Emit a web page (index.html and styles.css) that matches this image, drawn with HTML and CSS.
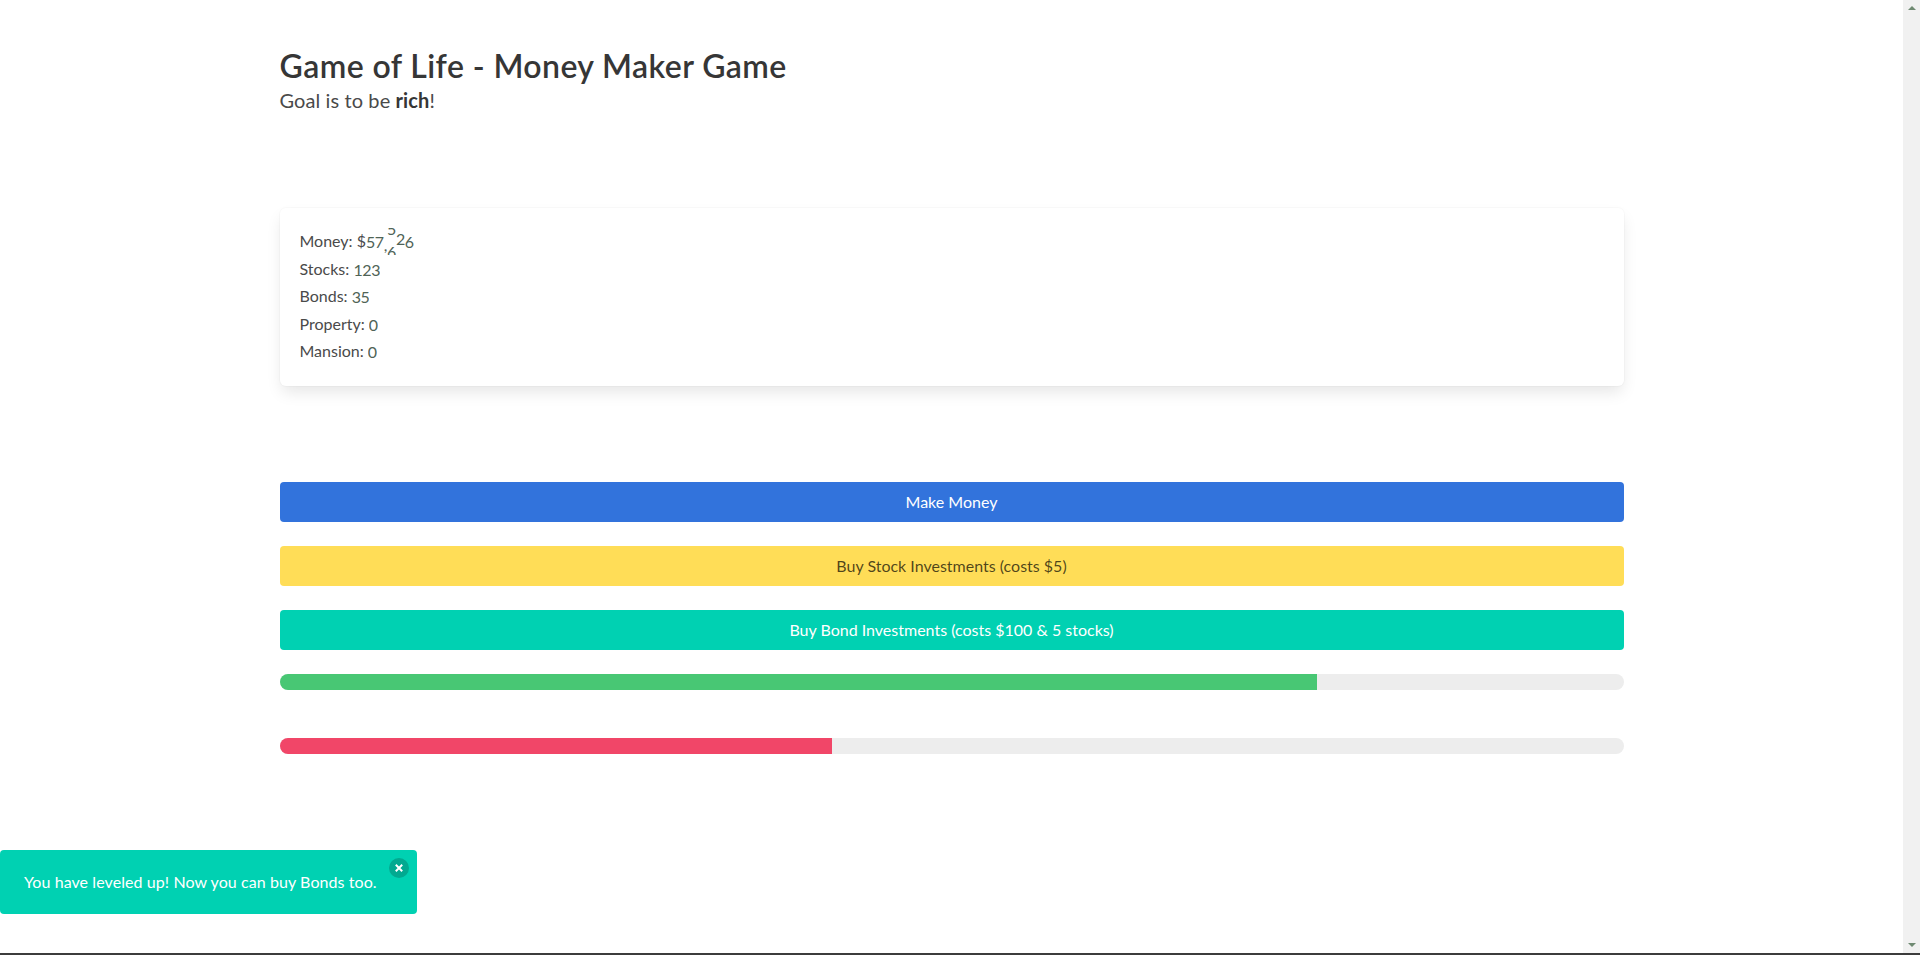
FILE: index.html
```html
<!DOCTYPE html>
<html lang="en">
<head>
  <meta charset="UTF-8">
  <meta name="viewport" content="width=device-width, initial-scale=1.0">
  <title>Game of Life - Money Maker Game</title>
  <link rel="stylesheet" href="styles.css">
</head>
<body>
  <div class="page">
    <main class="main">
      <section class="section">
        <div class="container">
          <h1 class="title">Game of Life - Money Maker Game</h1>
          <p class="subtitle">Goal is to be <strong>rich</strong>!</p>
        </div>
      </section>

      <section class="section">
        <div class="container">
          <div class="box">
            <div class="stat">Money: $<span class="odo">57<span class="comma">,</span><span class="roll roll-a"><span>5</span><span>6</span></span><span class="roll roll-b"><span>2</span><span>3</span></span>6</span></div>
            <div class="stat">Stocks: <span class="odo">123</span></div>
            <div class="stat">Bonds: <span class="odo">35</span></div>
            <div class="stat">Property: <span class="odo">0</span></div>
            <div class="stat">Mansion: <span class="odo">0</span></div>
          </div>
        </div>
      </section>

      <section class="section">
        <div class="container">
          <button class="button is-link">Make Money</button>
          <button class="button is-warning">Buy Stock Investments (costs $5)</button>
          <button class="button is-primary">Buy Bond Investments (costs $100 &amp; 5 stocks)</button>
          <div class="progress"><div class="progress-fill is-success" style="width: 77.2%"></div></div>
          <div class="progress"><div class="progress-fill is-danger" style="width: 41.1%"></div></div>
        </div>
      </section>
    </main>

    <div class="scrollbar">
      <span class="arrow arrow-up"></span>
      <span class="arrow arrow-down"></span>
    </div>
  </div>
  <div class="window-edge"></div>

  <div class="notification">
    You have leveled up! Now you can buy Bonds too.
    <button class="delete" aria-label="close">
      <svg viewBox="0 0 20 20" width="20" height="20"><path d="M6.8 6.8l6.4 6.4M13.2 6.8l-6.4 6.4" stroke="#fff" stroke-width="2" fill="none"/></svg>
    </button>
  </div>
</body>
</html>
```

FILE: styles.css
```css
* {
  box-sizing: border-box;
}
html, body {
  height: 100%;
  margin: 0;
  overflow: hidden;
}
body {
  display: flex;
  flex-direction: column;
  font-family: 'Lato', 'Noto Sans', sans-serif;
  font-size: 16px;
  line-height: 1.5;
  color: #4a4a4a;
  background: #fff;
}
.page {
  flex: 1;
  display: flex;
  min-height: 0;
}
.main {
  flex: 1;
}
.scrollbar {
  width: 17px;
  background: #f1f1f1;
  display: flex;
  flex-direction: column;
  justify-content: space-between;
  align-items: center;
  padding: 6px 0;
}
.arrow {
  width: 0;
  height: 0;
  border-left: 4px solid transparent;
  border-right: 4px solid transparent;
}
.arrow-up {
  border-bottom: 4px solid #6f8a72;
}
.arrow-down {
  border-top: 4px solid #6f8a72;
}
.window-edge {
  height: 2px;
  background: #3c3c3c;
}

.section {
  padding: 48px 24px;
}
.container {
  width: 1344px;
  margin: 0 auto;
}
.title {
  margin: 0 0 4px;
  font-size: 32px;
  font-weight: 600;
  line-height: 35px;
  letter-spacing: 0.42px;
  color: #363636;
}
.subtitle {
  margin: 0;
  padding-top: 2px;
  font-size: 20px;
  line-height: 23px;
  letter-spacing: 0.1px;
  color: #4a4a4a;
}
.subtitle strong {
  font-weight: 700;
  color: #363636;
}

.box {
  height: 178px;
  padding: 20px;
  background: #fff;
  border-radius: 6px;
  box-shadow: 0 8px 16px -2px rgba(10, 10, 10, 0.1), 0 0 0 1px rgba(10, 10, 10, 0.02);
}
.stat {
  height: 27.6px;
  line-height: 26px;
}
.odo {
  display: inline-block;
  vertical-align: top;
  height: 27px;
  line-height: 28px;
  letter-spacing: -0.4px;
  color: #4f6356;
  overflow: hidden;
}
.comma {
  display: inline-block;
  vertical-align: top;
  transform: translateY(3px);
}
.roll {
  display: inline-block;
  vertical-align: top;
  line-height: 24px;
}
.roll span {
  display: block;
}
.roll-a {
  transform: translateY(-11px);
}
.roll-a span {
  height: 23px;
}
.roll-b {
  transform: translateY(-1px);
}
.roll-b span {
  height: 21px;
}

.button {
  display: block;
  width: 100%;
  height: 40px;
  margin-bottom: 24px;
  padding: 0 0 2px;
  border: none;
  border-radius: 4px;
  font-family: inherit;
  font-size: 16px;
  cursor: pointer;
}
.is-link {
  background: #3273dc;
  color: #fff;
}
.is-warning {
  background: #ffdd57;
  color: rgba(0, 0, 0, 0.7);
}
.is-primary {
  background: #00d1b2;
  color: #fff;
}

.progress {
  height: 16px;
  margin-bottom: 48px;
  background: #ededed;
  border-radius: 8px;
  overflow: hidden;
}
.progress-fill {
  height: 100%;
}
.is-success {
  background: #48c774;
}
.is-danger {
  background: #f14668;
}

.notification {
  position: fixed;
  left: 0;
  bottom: 41px;
  height: 64px;
  padding: 20px 40px 20px 24px;
  background: #00d1b2;
  color: #fff;
  border-radius: 4px;
  letter-spacing: 0.08px;
}
.delete {
  position: absolute;
  top: 8px;
  right: 8px;
  width: 20px;
  height: 20px;
  padding: 0;
  border: none;
  border-radius: 50%;
  background: rgba(10, 10, 10, 0.2);
  cursor: pointer;
}
.delete svg {
  display: block;
}
```
